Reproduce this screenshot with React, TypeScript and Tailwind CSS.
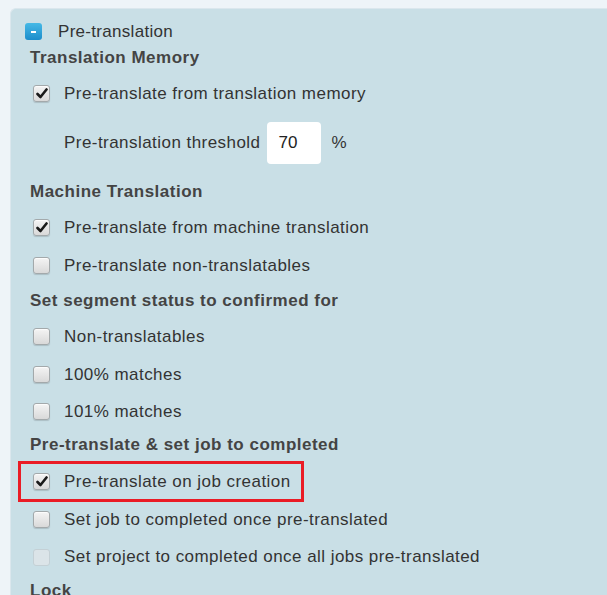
import React from 'react';

type Item = { label: string; checked?: boolean; disabled?: boolean; highlight?: boolean };

const Checkbox = ({ checked, disabled }: { checked?: boolean; disabled?: boolean }) => (
  <span
    className={`flex h-[17px] w-[17px] shrink-0 items-center justify-center rounded-[3px] border ${
      disabled
        ? 'border-[#c4d0d5] bg-[#dbe4e8]'
        : 'border-[#a3a9ab] bg-gradient-to-b from-[#f4f4f4] to-[#d9d9d9] shadow-[inset_0_1px_1px_rgba(255,255,255,0.8),0_1px_1px_rgba(0,0,0,0.15)]'
    }`}
  >
    {checked && (
      <svg width="12" height="11" viewBox="0 0 12 11">
        <path d="M1.5 6 L4.5 9 L10.5 1.5" fill="none" stroke="#1a1a1a" strokeWidth="2.6" strokeLinecap="round" strokeLinejoin="round" />
      </svg>
    )}
  </span>
);

const Row = ({ item, h = 'h-[37.5px]' }: { item: Item; h?: string }) => (
  <div className={`flex items-center ${h}`}>
    <div
      className={`ml-[-12px] flex items-center gap-[14px] border-[3px] py-[5px] pl-[12px] pr-[10px] ${
        item.highlight ? 'border-[#ea1c25]' : 'border-transparent'
      }`}
    >
      <Checkbox checked={item.checked} disabled={item.disabled} />
      <span className="text-[17px] tracking-[0.45px] text-[#333]">{item.label}</span>
    </div>
  </div>
);

const Heading = ({ children, className = 'h-[34px]' }: { children: React.ReactNode; className?: string }) => (
  <div className={`flex items-center text-[17px] font-bold tracking-[0.5px] text-[#444] ${className}`}>{children}</div>
);

export default function App() {
  return (
    <div
      className="h-[595px] w-[607px] overflow-hidden bg-[#eef4f8] pl-[10px] pt-[8px]"
      style={{ fontFamily: '"Liberation Sans", Arial, sans-serif' }}
    >
      <div className="h-[700px] rounded-tl-[6px] border-l border-t border-[#dbe7ed] bg-[#c9dfe6] pl-[19px] pt-[13px]">
        <div className="flex h-[19px] items-center gap-[16px]">
          <span className="ml-[-5px] flex h-[17px] w-[17px] items-center justify-center rounded-[3px] bg-gradient-to-b from-[#45b9e6] to-[#1b8dcb]">
            <span className="h-[2px] w-[5px] bg-white" />
          </span>
          <span className="text-[17px] tracking-[0.3px] text-[#333]">Pre-translation</span>
        </div>

        <Heading>Translation Memory</Heading>
        <Row item={{ label: 'Pre-translate from translation memory', checked: true }} h="h-[37px]" />

        <div className="flex h-[61px] items-center pl-[34px]">
          <span className="text-[17px] tracking-[0.45px] text-[#333]">Pre-translation threshold</span>
          <span className="ml-[7px] flex h-[42px] w-[54px] items-center rounded-[4px] bg-white pl-[11px] text-[17px] text-[#222]">
            70
          </span>
          <span className="ml-[10px] text-[17px] text-[#333]">%</span>
        </div>

        <Heading className="mt-[2px] h-[34px]">Machine Translation</Heading>
        <Row item={{ label: 'Pre-translate from machine translation', checked: true }} />
        <Row item={{ label: 'Pre-translate non-translatables' }} />

        <Heading>Set segment status to confirmed for</Heading>
        <Row item={{ label: 'Non-translatables' }} />
        <Row item={{ label: '100% matches' }} />
        <Row item={{ label: '101% matches' }} />

        <Heading className="mt-[-4px] h-[36px]">Pre-translate &amp; set job to completed</Heading>
        <Row item={{ label: 'Pre-translate on job creation', checked: true, highlight: true }} h="h-[38px]" />
        <Row item={{ label: 'Set job to completed once pre-translated' }} h="h-[38px]" />
        <Row item={{ label: 'Set project to completed once all jobs pre-translated', disabled: true }} h="h-[37px]" />

        <Heading className="h-[30px]">Lock</Heading>
      </div>
    </div>
  );
}
